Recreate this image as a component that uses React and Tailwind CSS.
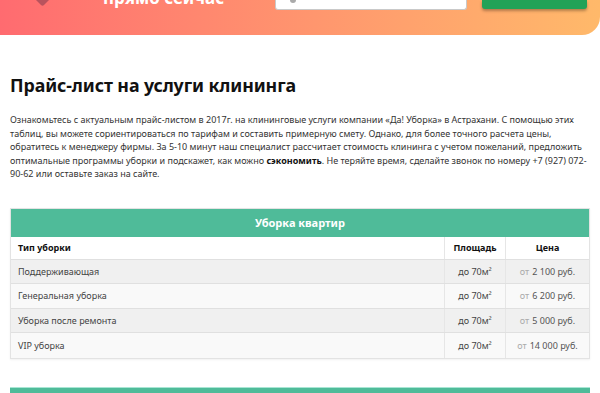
import React from "react";

const rows = [
  ["Поддерживающая", "до 70м²", "2 100 руб."],
  ["Генеральная уборка", "до 70м²", "6 200 руб."],
  ["Уборка после ремонта", "до 70м²", "5 000 руб."],
  ["VIP уборка", "до 70м²", "14 000 руб."],
];

export default function App() {
  return (
    <div
      className="w-[600px] h-[393px] overflow-hidden bg-white text-[#333]"
      style={{ fontFamily: '"Noto Sans", "Open Sans", sans-serif' }}
    >
      {/* Banner */}
      <div className="h-[35px] rounded-br-[18px] bg-gradient-to-r from-[#ff6b70] to-[#ffb96a] overflow-hidden">
        <div className="flex items-end h-[10px]">
          <div className="ml-[36px] w-[13px] h-[6px] self-start">
            <svg width="13" height="6" viewBox="0 0 13 6">
              <path d="M0 0 L13 0 L8 5 Q6.5 6.5 5 5 Z" fill="#b9535d" />
            </svg>
          </div>
          <div className="ml-[54px] self-start -mt-[12px] text-white font-bold text-[17px] leading-[20px] whitespace-nowrap">
            прямо сейчас
          </div>
          <div className="ml-[51px] self-start w-[192px] h-[10px] bg-white border border-[#c9c9c9] border-t-0 rounded-b-[3px] relative">
            <div className="absolute left-[14px] top-0 w-[6px] h-[3px] rounded-b-full bg-[#aaa]" />
          </div>
          <div className="ml-[15px] self-start w-[105px] h-[9px] bg-[#22a257] rounded-b-[3px] shadow-[0_2px_3px_rgba(0,0,0,0.3)]" />
        </div>
      </div>

      {/* Content */}
      <div className="px-[10px]">
        <h1 className="mt-[38px] text-[17.8px] leading-[24px] font-bold text-[#111] tracking-[-0.1px]">
          Прайс-лист на услуги клининга
        </h1>
        <p className="mt-[16px] text-[9px] leading-[13.6px] text-[#333] whitespace-nowrap">
          Ознакомьтесь с актуальным прайс-листом в 2017г. на клининговые услуги компании «Да! Уборка» в Астрахани. С помощью этих
          <br />
          таблиц, вы можете сориентироваться по тарифам и составить примерную смету. Однако, для более точного расчета цены,
          <br />
          обратитесь к менеджеру фирмы. За 5-10 минут наш специалист рассчитает стоимость клининга с учетом пожеланий, предложить
          <br />
          оптимальные программы уборки и подскажет, как можно <b className="text-[#111]">сэкономить</b>. Не теряйте время, сделайте звонок по номеру +7 (927) 072-
          <br />
          90-62 или оставьте заказ на сайте.
        </p>

        {/* Table */}
        <div className="mt-[27px] border border-[#e3e3e3] shadow-[0_1px_2px_rgba(0,0,0,0.06)]">
          <div className="h-[28px] bg-[#4fbb99] flex items-center justify-center text-white font-bold text-[11px]">
            Уборка квартир
          </div>
          <div className="flex h-[23px] bg-white text-[9px] font-bold text-[#111] border-b border-[#e0e0e0]">
            <div className="flex-1 flex items-center pl-[7px]">Тип уборки</div>
            <div className="w-[61px] flex items-center justify-center border-l border-[#e6e6e6]">Площадь</div>
            <div className="w-[84px] flex items-center justify-center border-l border-[#e6e6e6]">Цена</div>
          </div>
          {rows.map((r, i) => (
            <div
              key={i}
              className={`flex h-[24.5px] text-[9px] ${i % 2 === 0 ? "bg-[#f0f0f0]" : "bg-[#f9f9f9]"} ${i < 3 ? "border-b border-[#e0e0e0]" : ""}`}
            >
              <div className="flex-1 flex items-center pl-[7px] text-[#444]">{r[0]}</div>
              <div className="w-[61px] flex items-center justify-center border-l border-[#e6e6e6] text-[#444]">{r[1]}</div>
              <div className="w-[84px] flex items-center justify-center border-l border-[#e6e6e6] text-[#555]">
                <span className="text-[#aaa] mr-[3px]">от</span>
                {r[2]}
              </div>
            </div>
          ))}
        </div>

        <div className="mt-[28px] h-[10px] bg-[#4fbb99] border-t border-[#a8e6d4]" />
      </div>
    </div>
  );
}
